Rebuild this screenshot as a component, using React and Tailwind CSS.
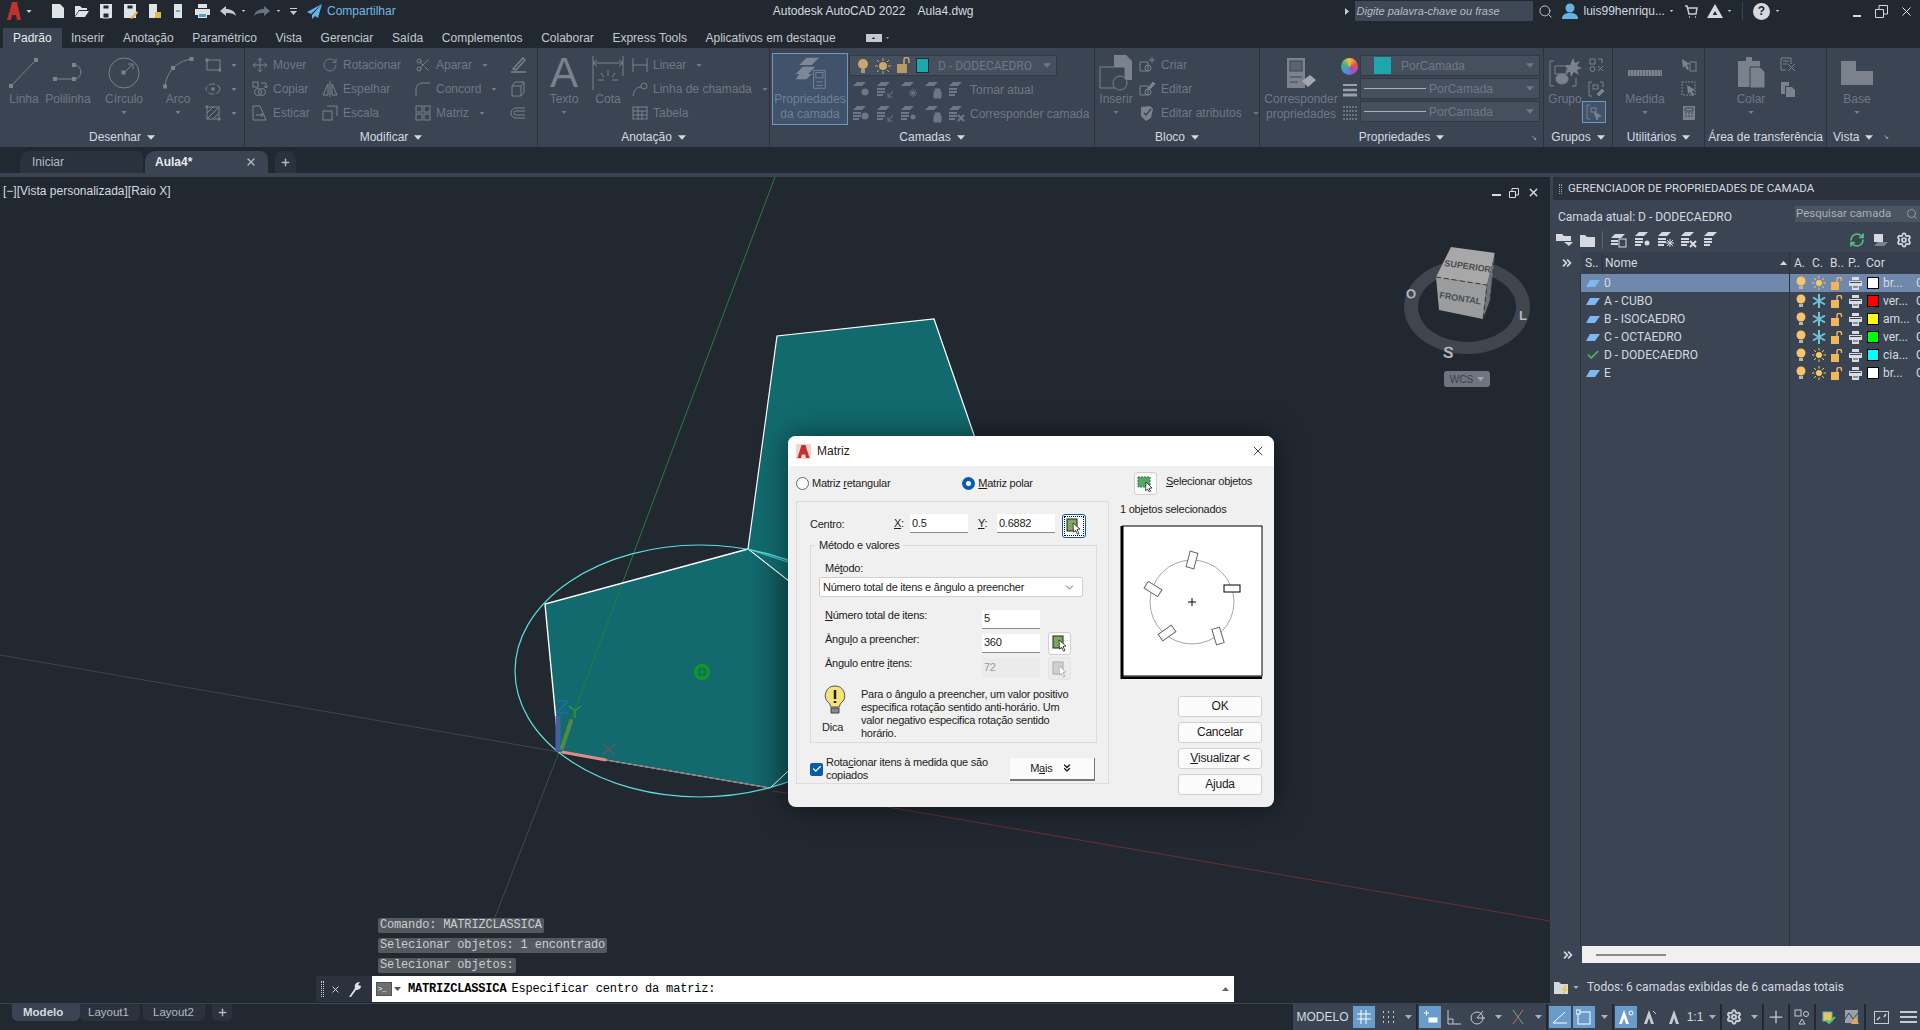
import React from 'react';
import { Move, RotateCw, Scissors, Search, RefreshCw, Settings, Check, ChevronsRight, ChevronsDown, ChevronDown, X, Plus } from 'lucide-react';

const Tri = ({ up = false, size = 7 }) => (
    <svg width={size} height={size - 3} viewBox="0 0 7 4" className="shrink-0">
        <path d={up ? 'M0 4h7L3.5 0z' : 'M0 0h7L3.5 4z'} fill="currentColor" />
    </svg>
);

const Ic = ({ w = 16, h = 16, vb, sw = 1, children }) => (
    <svg width={w} height={h} viewBox={vb || `0 0 ${w} ${h}`} fill="none" stroke="currentColor" strokeWidth={sw} className="shrink-0">
        {children}
    </svg>
);

// camada (parallelogram stack) + small badge
const Stack = ({ badge, n = 2 }) => (
    <Ic w={19} h={18}>
        <path d="M5 1h9l-4 4H1z" fill="currentColor" stroke="none" />
        {n > 1 && <path d="M1 8h8M1 11h8M1 14h6" strokeWidth="2" />}
        {badge === 'bulb' && <circle cx="13" cy="11" r="3.5" fill="currentColor" stroke="none" />}
        {badge === 'arrow' && <path d="M17 10l-5 6M12 12v4h4" />}
        {badge === 'snow' && <path d="M13 8v8M9 12h8M10 9l6 6M16 9l-6 6" />}
        {badge === 'lock' && <path d="M10 11h7v6h-7zM11 11V8h5v3" fill="currentColor" />}
        {badge === 'x' && <path d="M10 10l6 6M16 10l-6 6" strokeWidth="2" />}
        {badge === 'sun' && <circle cx="13" cy="12" r="2.5" fill="currentColor" stroke="none" />}
    </Ic>
);

const Tool = ({ icon, label, caret, gap = 'gap-[5px]' }) => (
    <div className={`flex h-[24px] items-center ${gap}`}>
        {icon}
        {label && <span>{label}</span>}
        {caret && <span className="ml-[5px]"><Tri size={6} /></span>}
    </div>
);

const Big = ({ w, icon, label, caret, extra = '' }) => (
    <div className={`flex shrink-0 flex-col items-center ${w} ${extra}`}>
        <div className="flex h-[39px] items-center justify-center">{icon}</div>
        <div className="text-center leading-[15px]">{label}</div>
        {caret && <div className="mt-[4px]"><Tri size={6} /></div>}
    </div>
);

const Panel = ({ w, label, corner, noCaret, children }) => (
    <div className={`relative flex shrink-0 flex-col border-r border-[#2b323e] ${w}`}>
        <div className="flex h-[79px] pt-[5px]">{children}</div>
        <div className="flex h-[20px] items-center justify-center gap-[6px] text-[#d6dae0]">
            <span>{label}</span>
            {!noCaret && <Tri size={8} />}
        </div>
        {corner && <span className="absolute bottom-[6px] right-[6px] text-[7px] leading-none text-[#aab0ba]">↘</span>}
    </div>
);

const Combo = ({ w = 'w-[180px]', children }) => (
    <div className={`flex h-[21px] items-center justify-between whitespace-nowrap border border-[#323a47] bg-[#464f5e] pr-[5px] text-[#6f7786] ${w}`}>
        <div className="flex items-center">{children}</div>
        <Tri size={8} />
    </div>
);

const Line = () => (
    <><span className="ml-[3px] mr-[2px] h-px w-[62px] bg-[#aab0ba]" /><span className="ml-[1px]">PorCamada</span></>
);

const Ribbon = () => (
    <div className="flex h-[99px] bg-[#3b4453] text-[12px] text-[#6f7786]">
        <Panel w="w-[245px]" label="Desenhar">
            <div className="flex pl-[5px] text-[#7b828e]">
                <Big w="w-[38px]" label={<span className="text-[#6f7786]">Linha</span>} icon={<Ic w={32} h={32}><path d="M3 29L28 3" /><rect x="1.5" y="27.5" width="3" height="3" fill="currentColor" /><rect x="26.5" y="1.5" width="3" height="3" fill="currentColor" /></Ic>} />
                <Big w="w-[50px]" label={<span className="text-[#6f7786]">Polilinha</span>} icon={<Ic w={32} h={24}><path d="M3 18h19a7 7 0 0 0 0-14" /><rect x="1.5" y="16.5" width="3" height="3" fill="currentColor" /><rect x="20.5" y="16.5" width="3" height="3" fill="currentColor" /><rect x="20.5" y="2.5" width="3" height="3" fill="currentColor" /></Ic>} />
                <Big w="w-[50px]" extra="ml-[6px]" caret label={<span className="text-[#6f7786]">Círculo</span>} icon={<Ic w={32} h={32}><circle cx="16" cy="16" r="15" /><rect x="14" y="14" width="3" height="3" fill="currentColor" /><path d="M16 16l8-8M20 7h5v5" /></Ic>} />
                <Big w="w-[50px]" extra="ml-[4px]" caret label={<span className="text-[#6f7786]">Arco</span>} icon={<Ic w={32} h={32}><path d="M3 30C4 16 14 4 30 2" /><rect x="1.5" y="28" width="3" height="3" fill="currentColor" /><rect x="9.5" y="9.5" width="3" height="3" fill="currentColor" /><rect x="28" y="0.5" width="3" height="3" fill="currentColor" /></Ic>} />
                <div className="ml-[2px] flex flex-col">
                    <Tool caret icon={<Ic><rect x="2" y="3" width="13" height="10" /><rect x="1" y="2" width="2" height="2" fill="currentColor" /><rect x="14" y="12" width="2" height="2" fill="currentColor" /></Ic>} />
                    <Tool caret icon={<Ic><ellipse cx="8" cy="8" rx="7" ry="5" strokeDasharray="6 2" /><rect x="7" y="7" width="2" height="2" fill="currentColor" /></Ic>} />
                    <Tool caret icon={<Ic><rect x="2" y="2" width="12" height="12" /><path d="M2 8l6-6M2 14L14 2M8 14l6-6M0 2h3M13 14h3M2 0v3M14 13v3" /></Ic>} />
                </div>
            </div>
        </Panel>
        <Panel w="w-[293px]" label="Modificar">
            <div className="flex pl-[7px]">
                <div className="w-[70px]">
                    <Tool label="Mover" icon={<span className="text-[#7b828e]"><Move size={16} strokeWidth={1.5} /></span>} />
                    <Tool label="Copiar" icon={<span className="text-[#7b828e]"><Ic><rect x="1" y="1" width="5" height="5" /><path d="M9 2h5v4M12 5l2 2 2-2" /><circle cx="6" cy="11" r="3.5" /><circle cx="10" cy="11" r="3.5" /></Ic></span>} />
                    <Tool label="Esticar" icon={<span className="text-[#7b828e]"><Ic><path d="M1 1h7l6 14H1zM4 10h7M9 8l2 2-2 2" /></Ic></span>} />
                </div>
                <div className="w-[93px]">
                    <Tool label="Rotacionar" icon={<span className="text-[#7b828e]"><RotateCw size={16} strokeWidth={1.3} /></span>} />
                    <Tool label="Espelhar" icon={<span className="text-[#7b828e]"><Ic><path d="M8 0v16M6 3L1 14h5zM10 3l5 11h-5z" /></Ic></span>} />
                    <Tool label="Escala" icon={<span className="text-[#7b828e]"><Ic><rect x="1" y="6" width="9" height="9" /><path d="M5 1h10v10" /></Ic></span>} />
                </div>
                <div className="w-[95px]">
                    <Tool label="Aparar" caret icon={<span className="text-[#7b828e]"><Scissors size={16} strokeWidth={1.4} /></span>} />
                    <Tool label="Concord" caret icon={<span className="text-[#7b828e]"><Ic><path d="M1 15V8a6 6 0 0 1 6-6h8" /></Ic></span>} />
                    <Tool label="Matriz" caret icon={<span className="text-[#7b828e]"><Ic><rect x="1" y="1" width="6" height="6" /><rect x="9" y="1" width="6" height="6" /><rect x="1" y="9" width="6" height="6" /><rect x="9" y="9" width="6" height="6" /></Ic></span>} />
                </div>
                <div className="text-[#7b828e]">
                    <Tool icon={<Ic><path d="M3 12L13 1l2 2-9 10zM1 15h15" strokeWidth="1.5" /></Ic>} />
                    <Tool icon={<Ic><path d="M2 5h9v10H2zM2 5l3-4h9v10l-3 4M11 5l3-4" /></Ic>} />
                    <Tool icon={<Ic><path d="M15 3H6a5 5 0 0 0 0 10h9M15 6H6a2 2 0 0 0 0 4h9" /></Ic>} />
                </div>
            </div>
        </Panel>
        <Panel w="w-[232px]" label="Anotação">
            <div className="flex pl-[6px]">
                <Big w="w-[40px]" caret label="Texto" icon={<span className="font-['Liberation_Sans',sans-serif] text-[42px] leading-none text-[#7b828e]">A</span>} />
                <Big w="w-[44px]" extra="ml-[2px]" label="Cota" icon={<span className="text-[#7b828e]"><Ic w={32} h={34}><path d="M1 0v34M31 0v20M1 7h30M5 4L1 7l4 3M27 4l4 3-4 3M16 14v6M9 17l3 4M23 17l-3 4M6 24h6M20 24h6" /></Ic></span>} />
                <div className="ml-[2px] flex flex-col">
                    <Tool label="Linear" caret icon={<span className="text-[#7b828e]"><Ic><path d="M1 1v14M15 1v14M1 8h14" /></Ic></span>} />
                    <Tool label="Linha de chamada" caret icon={<span className="text-[#7b828e]"><Ic><path d="M1 15c1-5 3-9 8-9" /><circle cx="12" cy="5" r="3" /></Ic></span>} />
                    <Tool label="Tabela" icon={<span className="text-[#7b828e]"><Ic><rect x="1" y="2" width="14" height="12" /><path d="M1 6h14M1 10h14M6 2v12M10 6v8" /></Ic></span>} />
                </div>
            </div>
        </Panel>
        <Panel w="w-[325px]" label="Camadas">
            <div className="flex pl-[2px]">
                <div className="flex h-[72px] w-[76px] shrink-0 flex-col items-center border border-[#6d99bb] bg-[#40536a] leading-[15px]">
                    <div className="flex h-[38px] items-center text-[#7f8794]"><Ic w={36} h={34} vb="0 2 36 38"><path d="M14 4h14l-8 8H6zM10 14h14l-8 8H2zM6 22h14l-6 6H2z" fill="currentColor" stroke="none" /><rect x="22" y="18" width="13" height="20" fill="#40536a" /><rect x="24.5" y="20.5" width="8" height="6" /><path d="M25 31h7M32 35h-7" /></Ic></div>
                    <div className="text-center text-[#708096]">Propriedades<br />da camada</div>
                </div>
                <div className="ml-[1px] mt-[2px] flex flex-col">
                    <Combo w="w-[208px]">
                        <span className="ml-[6px] flex items-center gap-[5px]">
                            <Ic w={14} h={16}><circle cx="7" cy="6" r="5" fill="#c9a86c" stroke="none" /><rect x="5" y="11" width="4" height="4" fill="#9a9a8c" stroke="none" /></Ic>
                            <Ic w={16} h={16}><circle cx="8" cy="8" r="4" fill="#c9a86c" stroke="none" /><path d="M8 0v3M8 13v3M0 8h3M13 8h3M2 2l2 2M12 12l2 2M14 2l-2 2M2 14l2-2" stroke="#c9a86c" /></Ic>
                            <Ic w={15} h={17}><rect x="1" y="7" width="10" height="9" fill="#b99a66" stroke="none" /><path d="M8 7V3a2.500 2.500 0 0 1 5 0v3" stroke="#c9a86c" strokeWidth="1.500" /></Ic>
                            <span className="h-[15px] w-[13px] border border-[#222933] bg-[#1ea6ac]" />
                            <span className="ml-[4px] font-['Roboto',sans-serif]">D - DODECAEDRO</span>
                        </span>
                    </Combo>
                    <div className="mt-[2px] flex h-[24px] items-center gap-[5px] pl-[3px]">
                        <Stack badge="bulb" n={1} /><Stack badge="arrow" /><Stack badge="snow" n={1} /><Stack badge="lock" n={1} /><Stack />
                        <span className="-ml-[2px]">Tornar atual</span>
                    </div>
                    <div className="flex h-[24px] items-center gap-[5px] pl-[3px]">
                        <Stack badge="bulb" /><Stack badge="arrow" /><Stack badge="sun" /><Stack badge="lock" n={1} /><Stack badge="x" />
                        <span className="-ml-[2px] whitespace-nowrap">Corresponder camada</span>
                    </div>
                </div>
            </div>
        </Panel>
        <Panel w="w-[165px]" label="Bloco">
            <div className="flex pl-[3px]">
                <Big w="w-[36px]" caret label="Inserir" icon={<span className="text-[#7b828e]"><Ic w={34} h={38}><path d="M15 1h12l6 6v19H15z" fill="currentColor" stroke="none" /><rect x="1" y="13" width="25" height="21" fill="#3b4453" /><circle cx="21" cy="29" r="7" fill="#3b4453" /></Ic></span>} />
                <div className="ml-[5px] flex flex-col">
                    <Tool label="Criar" gap="gap-[6px]" icon={<span className="text-[#7b828e]"><Ic><path d="M1 5h8v9H1z" /><circle cx="9" cy="11" r="3" /><path d="M13 0v6M10 3h6" /></Ic></span>} />
                    <Tool label="Editar" gap="gap-[6px]" icon={<span className="text-[#7b828e]"><Ic><path d="M1 5h8v9H1z" /><circle cx="9" cy="11" r="3" /><path d="M9 7l5-6 2 2-5 5" fill="currentColor" /></Ic></span>} />
                    <Tool label="Editar atributos" caret gap="gap-[6px]" icon={<span className="text-[#7b828e]"><Ic><path d="M2 2l9-1 3 3-2 9-5 3-5-5z" fill="currentColor" stroke="none" /><path d="M5 8l2 2 5-6" stroke="#3b4453" strokeWidth="1.500" /></Ic></span>} />
                </div>
            </div>
        </Panel>
        <Panel w="w-[284px]" label="Propriedades" corner>
            <div className="flex pl-[3px]">
                <Big w="w-[76px]" label={<>Corresponder<br />propriedades</>} icon={<span className="text-[#7b828e]"><Ic w={34} h={32}><rect x="3" y="1" width="18" height="30" fill="currentColor" stroke="none" /><rect x="6" y="4" width="12" height="10" fill="#5c6471" stroke="#3b4453" /><path d="M6 20h12M6 25h8" stroke="#3b4453" /><path d="M18 24l8-6 6 5-8 7z" fill="#a2a7af" stroke="none" /></Ic></span>} />
                <div className="mt-[2px] flex w-[21px] shrink-0 flex-col items-center">
                    <div className="flex h-[23px] items-center"><span className="h-[17px] w-[17px] rounded-full bg-[conic-gradient(#f0c040,#e05050,#a050c0,#5090e0,#40b080,#f0c040)]" /></div>
                    <div className="flex h-[23px] items-center text-[#9aa0a8]"><Ic><path d="M1 3h14" strokeWidth="2" /><path d="M1 8h14" strokeWidth="2.500" /><path d="M1 13h14" strokeWidth="3" /></Ic></div>
                    <div className="flex h-[23px] items-center text-[#9aa0a8]"><Ic><path d="M1 2h15M1 6h15M1 10h15M1 14h15" strokeDasharray="2 1" /></Ic></div>
                </div>
                <div className="mt-[2px] flex flex-col gap-[2px]">
                    <Combo><span className="ml-[13px] mr-[10px] h-[17px] w-[17px] bg-[#1ea6ac]" /><span>PorCamada</span></Combo>
                    <Combo><Line /></Combo>
                    <Combo><Line /></Combo>
                </div>
            </div>
        </Panel>
        <Panel w="w-[69px]" label="Grupos">
            <div className="flex pl-[3px] text-[#7b828e]">
                <Big w="w-[36px]" label={<span className="text-[#6f7786]">Grupo</span>} icon={<Ic w={33} h={30}><path d="M5 3H1v25h4M23 28h4v-8" /><rect x="6" y="8" width="12" height="8" /><ellipse cx="13" cy="21" rx="6" ry="5" fill="currentColor" /><path d="M24 0l2 5 5-2-3 5 5 2-5 2 2 5-5-3-3 5-1-5-5 1 3-4-3-4 5 0z" fill="currentColor" stroke="none" /></Ic>} />
                <div className="ml-[5px] flex flex-col">
                    <div className="flex h-[24px] items-center"><Ic><path d="M2 2h5v5H2zM10 9l5 5M15 9l-5 5" /><circle cx="4.500" cy="12" r="2.500" /><path d="M10 2h4v4" /></Ic></div>
                    <div className="flex h-[24px] items-center"><Ic><path d="M4 1H1v14h3M12 1h3v5" /><rect x="5" y="4" width="5" height="4" /><path d="M9 13l5-5 2 2-5 5z" fill="currentColor" /></Ic></div>
                    <div className="-ml-[6px] flex h-[22px] w-[24px] items-center justify-center border border-[#6d99bb] bg-[#40536a]"><Ic><path d="M4 1H1v14h3" /><rect x="5" y="4" width="5" height="4" /><path d="M8 8l7 4-3 1-1 3z" fill="currentColor" /></Ic></div>
                </div>
            </div>
        </Panel>
        <Panel w="w-[92px]" label="Utilitários">
            <div className="flex pl-[10px] text-[#7b828e]">
                <Big w="w-[44px]" caret label={<span className="text-[#6f7786]">Medida</span>} icon={<span className="h-[6px] w-[34px] bg-[repeating-linear-gradient(90deg,#7b828e_0,#7b828e_2px,#5f6673_2px,#5f6673_3px)]" />} />
                <div className="ml-[14px] flex flex-col">
                    <div className="flex h-[24px] items-center"><Ic><path d="M1 2l8 5-3 1 2 4-2 1-2-4-2 2z" fill="currentColor" stroke="none" /><rect x="9" y="5" width="6" height="9" /></Ic></div>
                    <div className="flex h-[24px] items-center"><Ic><rect x="1" y="1" width="13" height="13" strokeDasharray="2 1" /><path d="M6 4l8 5-3 1 2 4-2 1-2-4-2 2z" fill="currentColor" stroke="none" /></Ic></div>
                    <div className="flex h-[24px] items-center"><Ic><rect x="2" y="1" width="12" height="14" fill="currentColor" stroke="none" /><path d="M4 3h8v3H4zM4 8h2M7 8h2M10 8h2M4 11h2M7 11h2M10 11h2" stroke="#3b4453" /></Ic></div>
                </div>
            </div>
        </Panel>
        <Panel w="w-[122px]" noCaret label={<span className="whitespace-nowrap">Área de transferência</span>}>
            <div className="flex pl-[28px] text-[#7b828e]">
                <Big w="w-[36px]" caret label={<span className="text-[#6f7786]">Colar</span>} icon={<Ic w={28} h={34}><path d="M1 5h8V1h6v4h8v6H13v20H1z" fill="currentColor" stroke="none" /><path d="M13 11h10l5 5v16H13z" fill="currentColor" stroke="#3b4453" /></Ic>} />
                <div className="ml-[11px] flex flex-col">
                    <div className="flex h-[24px] items-center"><Ic><path d="M1 1h10v6M1 1v12h5M3 4h6M3 7h4" /><path d="M8 14l7-7M15 14L8 7" /></Ic></div>
                    <div className="flex h-[24px] items-center"><Ic><path d="M1 1h8v4H5v8H1z" fill="currentColor" stroke="none" /><path d="M6 6h6l3 3v7H6z" fill="currentColor" stroke="none" /></Ic></div>
                </div>
            </div>
        </Panel>
        <div className="flex w-[93px] shrink-0 flex-col">
            <div className="flex h-[79px] pl-[11px] pt-[5px] text-[#7b828e]">
                <Big w="w-[38px]" caret label={<span className="text-[#6f7786]">Base</span>} icon={<Ic w={32} h={24}><path d="M0 0h15v10h17v14H0z" fill="currentColor" stroke="none" /></Ic>} />
            </div>
            <div className="flex h-[20px] items-center gap-[6px] pl-[6px] text-[#d6dae0]">
                <span>Vista</span><Tri size={8} /><span className="ml-[4px] text-[7px] text-[#aab0ba]">↘</span>
            </div>
        </div>
    </div>
);

const TitleBar = () => (
    <div className="flex h-[28px] items-center bg-[#212830] pb-[6px] text-[12px] text-[#d6dae0]">
        <svg width="14" height="18" viewBox="0 0 14 18" className="ml-[7px] shrink-0"><path d="M5 0h5l4 18H10L9 13H5L4 18H0z" fill="#c0322b" /></svg>
        <span className="ml-[5px] text-[#c8ccd2]"><Tri size={6} /></span>
        <div className="ml-[18px] flex items-center gap-[8px] text-[#dfe3e8]">
            <Ic><path d="M2 1h8l4 4v10H2z" fill="currentColor" stroke="none" /></Ic>
            <Ic><path d="M1 13V3h5l2 2h5v2H5z M1 14l4-6h10l-4 6z" fill="currentColor" stroke="none" /></Ic>
            <Ic><path d="M2 1h12v14H2z" fill="currentColor" stroke="none" /><rect x="5" y="2" width="6" height="4" fill="#212830" /><rect x="5" y="10" width="6" height="5" fill="#212830" /></Ic>
            <Ic><path d="M2 1h12v14H2z" fill="currentColor" stroke="none" /><rect x="5" y="2" width="6" height="4" fill="#212830" /><path d="M8 15l7-7 1 2-6 6z" fill="#e9b44c" stroke="none" /></Ic>
            <Ic><rect x="3" y="1" width="8" height="14" fill="currentColor" stroke="none" /><rect x="9" y="9" width="6" height="6" fill="#e9b44c" stroke="none" /></Ic>
            <Ic><rect x="4" y="1" width="8" height="14" fill="currentColor" stroke="none" /><path d="M6 8h4" stroke="#5aaee0" strokeWidth="2" /></Ic>
            <Ic w={17}><path d="M4 1h9v4H4zM1 6h15v6H1zM4 10h9v5H4z" fill="currentColor" stroke="none" /><path d="M5 11h7v3H5z" fill="#4b9fd8" stroke="none" /></Ic>
        </div>
        <div className="ml-[8px] flex items-center text-[#c8ccd2]">
            <Ic w={18}><path d="M7 3L1 8l6 5v-3c4 0 7 0 10 3-1-5-5-7-10-7z" fill="currentColor" stroke="none" /></Ic>
            <span className="ml-[4px]"><Tri size={5} /></span>
            <span className="ml-[7px] text-[#6a7280]"><Ic w={18}><path d="M11 3l6 5-6 5v-3C7 10 4 10 1 13c1-5 5-7 10-7z" fill="currentColor" stroke="none" /></Ic></span>
            <span className="ml-[5px]"><Tri size={5} /></span>
            <span className="ml-[9px] flex flex-col items-center gap-[2px]"><span className="h-px w-[7px] bg-[#c8ccd2]" /><Tri size={7} /></span>
        </div>
        <svg width="17" height="17" viewBox="0 0 17 17" className="ml-[9px] shrink-0"><path d="M16 1L1 9l4 2zM16 1L6 12v4l3-3 3 2z" fill="#66b2e4" /></svg>
        <span className="ml-[4px] text-[#74b8e4]">Compartilhar</span>
        <span className="ml-[377px] whitespace-nowrap">Autodesk AutoCAD 2022</span>
        <span className="ml-[12px]">Aula4.dwg</span>
        <span className="ml-[371px] text-[#c8ccd2]"><svg width="4" height="7" viewBox="0 0 4 7"><path d="M0 0l4 3.500L0 7z" fill="currentColor" /></svg></span>
        <div className="ml-[6px] flex h-[20px] w-[178px] items-center bg-[#3f4856] pl-[2px] text-[11px] italic text-[#b7bcc4]">Digite palavra-chave ou frase</div>
        <span className="ml-[5px] text-[#c8ccd2]"><Search size={15} strokeWidth={1.5} /></span>
        <svg width="16" height="16" viewBox="0 0 16 16" className="ml-[9px] shrink-0"><circle cx="8" cy="5" r="4.500" fill="#66b2e4" /><path d="M0 16c0-5 4-6 8-6s8 1 8 6z" fill="#66b2e4" /></svg>
        <span className="ml-[6px] whitespace-nowrap">luis99henriqu...</span>
        <span className="ml-[4px] text-[#c8ccd2]"><Tri size={5} /></span>
        <span className="ml-[11px] text-[#c8ccd2]"><Ic w={13} h={13}><path d="M0 1h2l2 8h7l1-6H3M4 12h1M10 12h1" strokeWidth="1.500" /></Ic></span>
        <svg width="16" height="14" viewBox="0 0 16 14" className="ml-[9px] shrink-0"><path d="M8 0l8 14h-4L8 7l-4 7H0z M4 11h8v3H4z" fill="#d6dae0" /></svg>
        <span className="ml-[4px] text-[#c8ccd2]"><Tri size={5} /></span>
        <span className="ml-[10px] h-[18px] w-px bg-[#3b4453]" />
        <span className="ml-[10px] flex h-[17px] w-[17px] items-center justify-center rounded-full bg-[#d6dae0] text-[12px] font-bold text-[#212830]">?</span>
        <span className="ml-[5px] text-[#c8ccd2]"><Tri size={5} /></span>
        <span className="ml-[73px] h-[2px] w-[8px] translate-y-[5px] bg-[#d6dae0]" />
        <span className="ml-[14px] text-[#d6dae0]"><Ic w={13} h={13}><path d="M.5 4.500h8v8h-8zM4 4V.5h8.500V9H9" /></Ic></span>
        <span className="ml-[11px] text-[#e6e9ed]"><X size={15} strokeWidth={1.6} /></span>
    </div>
);

const tabs = ['Inserir', 'Anotação', 'Paramétrico', 'Vista', 'Gerenciar', 'Saída', 'Complementos', 'Colaborar', 'Express Tools', 'Aplicativos em destaque'];

const MenuTabs = () => (
    <div className="flex h-[20px] items-center bg-[#212830] pl-[3px] text-[12px] text-[#c4c9d0]">
        <div className="flex h-[20px] items-center bg-[#3b4453] px-[10px] text-[#e6e9ed]">Padrão</div>
        {tabs.map((t) => <div key={t} className="whitespace-nowrap px-[9.300px]">{t}</div>)}
        <span className="ml-[21px] flex h-[8px] w-[16px] items-center justify-center bg-[#c4c9d0] text-[#212830]"><Tri size={5} up /></span>
        <span className="ml-[3px] text-[#8f959f]"><Tri size={5} /></span>
    </div>
);

const DocTabs = () => (
    <>
        <div className="flex h-[26px] items-end bg-[#212830] pl-[20px] text-[12px]">
            <div className="flex h-[22px] w-[123px] items-center rounded-tl-[10px] rounded-tr-[6px] bg-[#2b323e] pl-[12px] text-[#b4bac3]">Iniciar</div>
            <div className="ml-[2px] flex h-[22px] w-[123px] items-center justify-between rounded-tl-[10px] rounded-tr-[8px] bg-[#3b4453] pl-[10px] pr-[11px] font-bold text-[#e6e9ed]">
                <span>Aula4*</span>
                <span className="text-[#b4bac3]"><X size={12} strokeWidth={2.5} /></span>
            </div>
            <div className="ml-[7px] flex h-[22px] w-[21px] items-center justify-center rounded-t-[8px] bg-[#2b323e] text-[#b4bac3]"><Plus size={11} strokeWidth={3} /></div>
        </div>
        <div className="h-[4px] bg-[#3b4453]" />
    </>
);

const Canvas = () => (
    <svg width="1550" height="826" viewBox="0 177 1550 826" className="absolute left-0 top-0">
        <defs>
            <linearGradient id="fade" x1="0" x2="1" y1="0" y2="0">
                <stop offset="0.8" stopColor="#126a6e" />
                <stop offset="1" stopColor="#0e5056" />
            </linearGradient>
        </defs>
        {/* ejes */}
        <path d="M0 655L559 752" stroke="#3f454c" />
        <path d="M882 806L1550 921" stroke="#6b2f33" />
        <path d="M559 752L490 930" stroke="#444a50" />
        {/* pentagonos */}
        <path d="M748 549L777 336L934 319L974 435L1000 520L900 600L790 582z" fill="#126a6e" stroke="#fff" strokeWidth="1.200" />
        <path d="M545 604L748 549L800 590L800 775L770 788L559 752z" fill="url(#fade)" />
        <path d="M775 177L559 752" stroke="#2c7a3c" />
        <path d="M748 549L545 604L559 752" fill="none" stroke="#fff" strokeWidth="1.400" />
        <path d="M559 752L770 788L800 760" fill="none" stroke="#fff" strokeWidth="1" />
        <path d="M559 752L770 788" fill="none" stroke="#8a6a6a" strokeWidth="1" />
        <path d="M748 549L800 590" stroke="#fff" />
        <path d="M748 549L800 566" stroke="#4fd8dc" />
        <ellipse cx="700" cy="671" rx="185" ry="126" fill="none" stroke="#5fdde2" strokeWidth="1.200" />
        <path d="M772 791L882 806" stroke="#6b2f33" />
        {/* centro */}
        <circle cx="702" cy="672" r="6.500" fill="none" stroke="#0aa01e" strokeWidth="3" />
        <path d="M702 667v10M697 672h10" stroke="#0aa01e" />
        {/* UCS */}
        <path d="M558 716v36" stroke="#44609f" strokeWidth="5" />
        <path d="M562 748l9-27" stroke="#4f8b44" strokeWidth="4" strokeLinecap="round" />
        <path d="M562 752l44 8" stroke="#e28a86" strokeWidth="3" />
        <path d="M557 701h11l-11 12h11" fill="none" stroke="#1f6fc0" strokeWidth="1.200" />
        <path d="M569 706l6 5 6-5M575 711v7" fill="none" stroke="#2aa33e" strokeWidth="1.200" />
        <path d="M603 744l12 11M615 744l-12 11" stroke="#a04a4a" />
        {/* viewcube */}
        <path fillRule="evenodd" d="M1404 307a63 47 0 1 0 126 0a63 47 0 1 0-126 0zM1418 307a49 35 0 1 1 98 0a49 35 0 1 1-98 0z" fill="#40454e" />
        <path d="M1451 247L1495 253L1487 285L1436 277z" fill="#a8a8a8" />
        <path d="M1436 277L1487 285L1483 319L1439 310z" fill="#9b9c9e" />
        <path d="M1495 253L1487 285L1483 319L1490 300z" fill="#6f7276" />
        <path d="M1436 277L1487 285L1483 319M1495 253L1490 300" fill="none" stroke="#35383d" strokeDasharray="5 3" />
        <text x="1444" y="266" fontSize="9" fontWeight="700" fill="#4a4d52" fontFamily="Liberation Sans" transform="rotate(8 1444 266)">SUPERIOR</text>
        <text x="1439" y="298" fontSize="9" fontWeight="700" fill="#4a4d52" fontFamily="Liberation Sans" transform="rotate(9 1439 298)">FRONTAL</text>
        <text x="1406" y="298" fontSize="13" fontWeight="700" fill="#b4b7bc" fontFamily="Liberation Sans" transform="rotate(-12 1412 294)">O</text>
        <text x="1519" y="320" fontSize="13" fontWeight="700" fill="#b4b7bc" fontFamily="Liberation Sans">L</text>
        <text x="1443" y="358" fontSize="16" fontWeight="700" fill="#b4b7bc" fontFamily="Liberation Sans" transform="rotate(6 1449 352)">S</text>
    </svg>
);

const CommandLine = () => (
    <div className="absolute bottom-px left-[316px] w-[918px] font-['Liberation_Mono',monospace] text-[12px] tracking-[-0.17px]">
        <div className="ml-[62px] flex flex-col items-start gap-[5px] text-[#c9cdd1]">
            <span className="rounded-[2px] bg-[#54595f] px-[2px] leading-[15px]">Comando: MATRIZCLASSICA</span>
            <span className="rounded-[2px] bg-[#54595f] px-[2px] leading-[15px]">Selecionar objetos: 1 encontrado</span>
            <span className="rounded-[2px] bg-[#54595f] px-[2px] leading-[15px]">Selecionar objetos:</span>
        </div>
        <div className="mt-[3px] flex h-[26px] items-stretch">
            <div className="flex w-[56px] items-center bg-[#2b323e] pl-[5px] text-[#dfe3e8]">
                <span className="h-[16px] w-[3px] border-x border-dotted border-[#c8ccd2]" />
                <span className="ml-[6px]"><X size={11} strokeWidth={2} /></span>
                <svg width="14" height="16" viewBox="0 0 14 16" className="ml-[7px]"><path d="M1 16l6-9c-1-3 1-6 5-6l-2 3 3 1c0 3-3 4-5 4l-5 7z" fill="currentColor" /></svg>
            </div>
            <div className="flex flex-1 items-center bg-white pl-[4px] pr-[5px] text-black">
                <span className="flex h-[14px] w-[16px] items-center border border-[#555] bg-[#6b6f74] pl-[1px] text-[7px] leading-none text-white">&gt;_</span>
                <span className="ml-[2px] text-[#555]"><Tri size={7} /></span>
                <span className="ml-[7px] font-bold">MATRIZCLASSICA</span>
                <span className="ml-[5px]">Especificar centro da matriz:</span>
                <span className="ml-auto text-[#666]"><Tri size={7} up /></span>
            </div>
        </div>
    </div>
);

const Input = ({ value, disabled }) => (
    <div className={`flex h-[19px] w-[58px] shrink-0 items-center pl-[2px] ${disabled ? 'bg-[#ebebeb] text-[#9a9a9a]' : 'border-b border-[#8a8a8a] bg-white'}`}>{value}</div>
);

const PickIcon = ({ off }) => (
    <svg width="16" height="18" viewBox="0 0 16 18">
        <rect x="1" y="2" width="10" height="12" fill={off ? '#d0d0d0' : '#7aa85f'} stroke={off ? '#aaa' : '#222'} />
        <path d="M7 6l7 6-3 .5 2 4-1.500 .7-2-4-2 2z" fill="#fff" stroke={off ? '#aaa' : '#222'} strokeWidth=".8" />
    </svg>
);

const PickBtn = ({ off, extra = '' }) => (
    <div className={`flex h-[23px] w-[23px] items-center justify-center rounded-[3px] border ${off ? 'border-[#e4e4e4] bg-[#ececec]' : 'border-[#d0d0d0] bg-[#fbfbfb]'} ${extra}`}><PickIcon off={off} /></div>
);

const Btn = ({ children }) => (
    <div className="flex h-[21px] w-[84px] items-center justify-center rounded-[3px] border border-[#d0d0d0] bg-[#fbfbfb]">{children}</div>
);

const Preview = () => (
    <svg width="143" height="154" viewBox="0 0 143 154" className="block">
        <rect x="2.500" y="1" width="139.500" height="150" fill="#fff" stroke="#000" strokeWidth="1" />
        <path d="M2 1v152h140" fill="none" stroke="#000" strokeWidth="3" />
        <circle cx="72" cy="77" r="42" fill="none" stroke="#a8a8a8" />
        <path d="M68 77h8M72 73v8" stroke="#000" />
        <g fill="#fff" stroke="#666">
            <rect x="-4" y="-8" width="8" height="16" transform="translate(72 35) rotate(15)" />
            <rect x="-8" y="-4" width="16" height="8" transform="translate(33 64) rotate(32)" />
            <rect x="-8" y="-4" width="16" height="8" transform="translate(47 108) rotate(-35)" />
            <rect x="-4" y="-8" width="8" height="16" transform="translate(98 111) rotate(-17)" />
        </g>
        <rect x="104" y="60" width="16" height="7" fill="#fff" stroke="#000" />
    </svg>
);

const FieldRow = ({ label, value, disabled, btn, off }) => (
    <div className="flex h-[24px] items-center">
        <span className="w-[163px] shrink-0 -translate-y-[4px] pl-[6px]">{label}</span>
        <Input value={value} disabled={disabled} />
        {btn && <PickBtn off={off} extra={off ? 'ml-[8px] mt-[3px]' : 'ml-[8px]'} />}
    </div>
);

const Dialog = () => (
    <div className="absolute left-[788px] top-[259px] h-[371px] w-[486px] overflow-hidden rounded-[8px] bg-[#f0f0f0] font-['Liberation_Sans',sans-serif] text-[11px] leading-[13px] tracking-[-0.25px] text-[#1c1c1c] shadow-[0_0_30px_rgba(0,0,0,0.5)]">
        <div className="flex h-[30px] items-center bg-white pl-[8px] pr-[8px]">
            <svg width="15" height="15" viewBox="0 0 15 15"><rect width="15" height="15" fill="#f4d3d0" /><path d="M5.500 1h4l4 13H10l-.8-3.500H5.800L5 14H1.500z" fill="#c0322b" /></svg>
            <span className="ml-[6px] text-[12px] tracking-normal">Matriz</span>
            <span className="ml-auto"><X size={16} strokeWidth={1.2} /></span>
        </div>
        <div className="flex pl-[8px] pt-[7px]">
            <div className="w-[313px] shrink-0">
                <div className="flex h-[20px] items-center">
                    <span className="h-[13px] w-[13px] rounded-full border border-[#666] bg-white" />
                    <span className="ml-[3px]">Matriz <u>r</u>etangular</span>
                    <span className="ml-[72px] flex h-[13px] w-[13px] items-center justify-center rounded-full bg-[#0a5cab]"><span className="h-[5px] w-[5px] rounded-full bg-white" /></span>
                    <span className="ml-[3px]"><u>M</u>atriz polar</span>
                </div>
                <div className="mt-[8px] h-[283px] border border-[#dcdcdc] px-[13px] pt-[12px]">
                    <div className="flex h-[24px] items-start">
                        <span className="mt-[4px] w-[84px]">Centro:</span>
                        <span className="mt-[3px] w-[16px]"><u>X</u>:</span>
                        <Input value="0.5" />
                        <span className="ml-[10px] mt-[3px] w-[19px]"><u>Y</u>:</span>
                        <Input value="0.6882" />
                        <div className="ml-[7px] flex h-[24px] w-[24px] items-center justify-center rounded-[3px] border border-[#0a5cab] bg-[#fbfbfb]"><span className="flex h-[20px] w-[20px] items-center justify-center border border-dotted border-black"><PickIcon /></span></div>
                    </div>
                    <div className="relative mt-[7px] h-[198px] w-[287px] border border-[#dcdcdc] px-[8px] pt-[16px]">
                        <span className="absolute -top-[7px] left-[4px] bg-[#f0f0f0] px-[4px]">Método e valores</span>
                        <div className="pl-[6px]">Mé<u>t</u>odo:</div>
                        <div className="mt-[2px] flex h-[20px] w-[264px] items-center justify-between rounded-[2px] border border-[#cfcfcf] bg-white pl-[3px] pr-[6px]">
                            <span>Número total de itens e ângulo a preencher</span>
                            <ChevronDown size={13} strokeWidth={1.2} />
                        </div>
                        <div className="mt-[10px]">
                            <FieldRow label={<><u>N</u>úmero total de itens:</>} value="5" />
                            <FieldRow label={<>Ângu<u>l</u>o a preencher:</>} value="360" btn />
                            <FieldRow label={<>Ângulo entre <u>i</u>tens:</>} value="72" disabled btn off />
                        </div>
                        <div className="mt-[6px] flex pl-[3px]">
                            <div className="flex w-[39px] shrink-0 flex-col items-start">
                                <svg width="22" height="30" viewBox="0 0 22 30" className="ml-[2px]"><path d="M11 1a9.500 9.500 0 0 0-6 17c1 1 1.500 3 1.500 4h9c0-1 .5-3 1.500-4a9.500 9.500 0 0 0-6-17z" fill="#f5e27a" stroke="#555" /><path d="M11 5v9M11 16v2" stroke="#222" strokeWidth="2.500" /><path d="M7 23h8v5H7z" fill="#888" stroke="#444" /></svg>
                                <span className="mt-[6px]">Dica</span>
                            </div>
                            <div className="whitespace-nowrap pt-[3px]">Para o ângulo a preencher, um valor positivo<br />especifica rotação sentido anti-horário. Um<br />valor negativo especifica rotação sentido<br />horário.</div>
                        </div>
                    </div>
                    <div className="mt-[13px] flex items-center">
                        <span className="flex h-[13px] w-[13px] shrink-0 items-center justify-center rounded-[2px] bg-[#0a5cab] text-white"><Check size={10} strokeWidth={3} /></span>
                        <span className="ml-[3px] w-[182px]">Rota<u>c</u>ionar itens à medida que são<br />copiados</span>
                        <div className="ml-[3px] flex h-[23px] w-[86px] items-center justify-center gap-[9px] border-b-2 border-r border-[#777] bg-[#fbfbfb]"><span>M<u>a</u>is</span><ChevronsDown size={12} strokeWidth={2.5} /></div>
                    </div>
                </div>
            </div>
            <div className="-mt-[1px] ml-[11px] flex-1">
                <div className="flex items-center">
                    <div className="ml-[14px] flex h-[23px] w-[23px] items-center justify-center rounded-[3px] border border-[#d0d0d0] bg-[#fbfbfb]"><svg width="17" height="17" viewBox="0 0 17 17"><rect x="1" y="2" width="12" height="10" fill="#55a868" stroke="#2f7a3c" strokeDasharray="2 1" /><path d="M9 7l6 6-3 .3 1.500 3-1.400 .6-1.500-3-2 2z" fill="#fff" stroke="#222" strokeWidth=".8" /></svg></div>
                    <span className="ml-[9px] -translate-y-[2px]"><u>S</u>elecionar objetos</span>
                </div>
                <div className="mt-[8px]">1 objetos selecionados</div>
                <div className="mt-[9px]"><Preview /></div>
                <div className="ml-[58px] mt-[17px] flex flex-col gap-[5px] text-[12px]">
                    <Btn>OK</Btn>
                    <Btn>Cancelar</Btn>
                    <Btn><u>V</u>isualizar &lt;</Btn>
                    <Btn>A<u>j</u>uda</Btn>
                </div>
            </div>
        </div>
    </div>
);

const Bulb = () => <Ic w={10} h={14}><circle cx="5" cy="5" r="4.500" fill="#f6c56b" stroke="none" /><rect x="3" y="10" width="4" height="3" fill="#b9b9a8" stroke="none" /></Ic>;
const Sun = () => <Ic w={14} h={14}><circle cx="7" cy="7" r="3" fill="#f4cc62" stroke="none" /><path d="M7 0v2.500M7 11.500V14M0 7h2.500M11.500 7H14M2 2l2 2M10 10l2 2M12 2l-2 2M2 12l2-2" stroke="#f4cc62" /></Ic>;
const Snow = () => <Ic w={14} h={14}><path d="M7 0v14M1 3.500l12 7M13 3.500l-12 7" stroke="#6fc6d8" strokeWidth="2" /></Ic>;
const Lock = () => <Ic w={12} h={13}><rect x="0" y="5" width="8" height="8" fill="#efb65c" stroke="none" /><path d="M6 5V2.500a2.200 2.200 0 0 1 4.500 0V4" stroke="#efb65c" strokeWidth="1.400" /></Ic>;
const Printer = () => <Ic w={13} h={13}><path d="M3 0h7v3H3zM0 4h13v5H0zM3 8h7v5H3z" fill="#d8dde3" stroke="none" /><path d="M4 10h5M1 5.500h11" stroke="#3b4453" /></Ic>;

const layers = [
    { name: '0', color: '#ffffff', cn: 'br...', sun: true, sel: true },
    { name: 'A - CUBO', color: '#ff0000', cn: 'ver...' },
    { name: 'B - ISOCAEDRO', color: '#ffff00', cn: 'am...' },
    { name: 'C - OCTAEDRO', color: '#00ff00', cn: 'ver...' },
    { name: 'D - DODECAEDRO', color: '#00ffff', cn: 'cia...', sun: true, cur: true },
    { name: 'E', color: '#ffffff', cn: 'br...', sun: true },
];

const Palette = () => (
    <div className="flex w-[370px] shrink-0 flex-col border-l-[3px] border-[#3b4453] bg-[#212830] font-['Roboto',sans-serif] text-[12px] text-[#d6dae0]">
        <div className="flex h-[23px] items-center bg-[#2b323e] pl-[6px] pt-[1px]">
            <span className="h-[10px] w-[3px] border-x border-dotted border-[#9aa0a8]" />
            <span className="ml-[6px] whitespace-nowrap text-[11.500px]">GERENCIADOR DE PROPRIEDADES DE CAMADA</span>
        </div>
        <div className="flex flex-1 flex-col bg-[#3b4453]">
            <div className="flex h-[30px] items-center justify-between pl-[5px] pt-[4px]">
                <span>Camada atual: D - DODECAEDRO</span>
                <div className="-mt-[6px] flex h-[16px] w-[125px] items-center justify-between bg-[#4a5462] pl-[1px] pr-[2px] text-[11.500px] text-[#a8aeb8]">
                    <span>Pesquisar camada</span><Search size={12} strokeWidth={1.5} />
                </div>
            </div>
            <div className="flex h-[20px] items-center pl-[3px] pr-[8px] text-[#d6dae0]">
                <Ic w={17} h={14}><path d="M0 1h6l2 2h7v5H0z" fill="currentColor" stroke="none" /><path d="M8 9h9l-4 4z" fill="currentColor" stroke="none" /></Ic>
                <span className="ml-[7px]"><Ic w={15} h={13}><path d="M0 1h5l2 2h8v10H0z" fill="currentColor" stroke="none" /></Ic></span>
                <span className="ml-[7px] h-[18px] w-px bg-[#5a6472]" />
                <span className="ml-[7px]"><Ic w={17} h={15}><path d="M5 1h10l-4 4H1z" fill="currentColor" stroke="none" /><path d="M1 8h7M1 11h7" strokeWidth="2" /><rect x="9" y="6" width="7" height="8" fill="#3b4453" /></Ic></span>
                <span className="ml-[7px]"><Stack badge="sun" /></span>
                <span className="ml-[4px]"><Stack badge="snow" /></span>
                <span className="ml-[4px]"><Stack badge="x" /></span>
                <span className="ml-[4px]"><Stack /></span>
                <span className="ml-auto text-[#4fc27a]"><RefreshCw size={16} strokeWidth={2.500} /></span>
                <span className="ml-[8px]"><Ic w={15} h={14}><path d="M1 1h9v8H1z" fill="currentColor" stroke="none" /><path d="M1 13l4-4h10l-4 4z" fill="#7b828e" stroke="none" /></Ic></span>
                <span className="ml-[8px]"><Settings size={16} strokeWidth={2.500} /></span>
            </div>
            <div className="mt-[2px] flex h-[22px] items-center">
                <div className="flex w-[28px] shrink-0 justify-center"><ChevronsRight size={14} strokeWidth={3} /></div>
                <div className="flex h-full w-[209px] shrink-0 items-center border-r border-[#2b323e] bg-[#363f4d]">
                    <span className="w-[22px] shrink-0 border-r border-[#2b323e] pl-[4px]">S..</span>
                    <span className="pl-[2px]">Nome</span>
                    <span className="ml-auto mr-[2px]"><Tri size={7} up /></span>
                </div>
                <div className="flex h-full flex-1 items-center bg-[#363f4d]">
                    <span className="w-[18px] shrink-0 pl-[4px]">A.</span>
                    <span className="w-[18px] shrink-0 pl-[4px]">C.</span>
                    <span className="w-[18px] shrink-0 pl-[4px]">B..</span>
                    <span className="w-[18px] shrink-0 pl-[4px]">P..</span>
                    <span className="pl-[4px]">Cor</span>
                </div>
            </div>
            <div className="flex flex-1">
                <div className="w-[28px] shrink-0 border-r border-[#2b323e]" />
                <div className="w-[209px] shrink-0 border-r border-[#2b323e]">
                    {layers.map((l) => (
                        <div key={l.name} className={`flex h-[18px] items-center pl-[2px] ${l.sel ? 'bg-[#6f88ab]' : ''}`}>
                            <span className="flex w-[19px] shrink-0 justify-center">
                                {l.cur ? <span className="text-[#59c06a]"><Check size={14} strokeWidth={2.500} /></span> : <svg width="14" height="7" viewBox="0 0 14 7"><path d="M4 0h10L9 7H0z" fill="#7cb8f2" /></svg>}
                            </span>
                            <span className="ml-[2px] whitespace-nowrap">{l.name}</span>
                        </div>
                    ))}
                </div>
                <div className="flex-1 overflow-hidden">
                    {layers.map((l) => (
                        <div key={l.name} className={`flex h-[18px] items-center whitespace-nowrap pl-[3px] ${l.sel ? 'bg-[#6f88ab]' : ''}`}>
                            <span className="flex w-[16px] shrink-0 justify-center"><Bulb /></span>
                            <span className="flex w-[19px] shrink-0 justify-center">{l.sun ? <Sun /> : <Snow />}</span>
                            <span className="flex w-[18px] shrink-0 justify-center"><Lock /></span>
                            <span className="flex w-[19px] shrink-0 justify-center"><Printer /></span>
                            <span className="ml-[2px] h-[12px] w-[12px] shrink-0 border border-black" style={{ backgroundColor: l.color }} />
                            <span className="ml-[4px] w-[33px] shrink-0">{l.cn}</span>
                            <span>C</span>
                        </div>
                    ))}
                </div>
            </div>
            <div className="flex h-[17px]">
                <div className="flex w-[29px] shrink-0 items-center justify-center"><ChevronsRight size={14} strokeWidth={3} /></div>
                <div className="flex flex-1 items-center bg-[#f0f0f0] pl-[14px]"><span className="h-[2px] w-[70px] bg-[#8a8a8a]" /></div>
            </div>
            <div className="flex h-[40px] items-center pl-[1px] pt-[8px]">
                <Ic w={16} h={15}><path d="M0 2h5l2 2h7v10H0z" fill="#d6dae0" stroke="none" /><path d="M11 5l-4 5h3l-2 5 6-6h-3l2-4z" fill="#e9c84c" stroke="none" /></Ic>
                <span className="ml-[3px] text-[#aab0ba]"><Tri size={6} /></span>
                <span className="ml-[8px] whitespace-nowrap">Todos: 6 camadas exibidas de 6 camadas totais</span>
            </div>
        </div>
    </div>
);

const SB = ({ on, children, w = 'w-[22px]' }) => (
    <div className={`mx-[1px] flex h-[22px] shrink-0 items-center justify-center ${w} ${on ? 'bg-[#6a9ccb] text-white' : 'text-[#c8ccd2]'}`}>{children}</div>
);

const SCaret = () => <span className="flex w-[16px] shrink-0 justify-center text-[#aab0ba]"><Tri size={7} /></span>;

const StatusBar = () => (
    <div className="flex h-[27px] border-t border-[#3b4453] bg-[#212830] text-[12px] text-[#d6dae0]">
        <div className="flex h-[17px] items-start pl-[12px] text-[11.500px]">
            <div className="flex h-[17px] w-[68px] items-center rounded-b-[6px] bg-[#3b4453] pl-[11px] font-bold">Modelo</div>
            <div className="flex h-[17px] w-[60px] items-center rounded-b-[6px] bg-[#2b323e] pl-[8px] text-[#b4bac3]">Layout1</div>
            <div className="ml-[3px] flex h-[17px] w-[62px] items-center rounded-b-[6px] bg-[#2b323e] pl-[10px] text-[#b4bac3]">Layout2</div>
            <div className="ml-[7px] flex h-[17px] w-[20px] items-center justify-center rounded-b-[6px] bg-[#2b323e] text-[#b4bac3]"><Plus size={11} strokeWidth={3} /></div>
        </div>
        <div className="ml-auto flex h-[26px] items-center gap-[2px]">
            <div className="flex h-[26px] items-center bg-[#3b4453]">
                <span className="w-[59px] shrink-0 text-center">MODELO</span>
                <SB on><Ic><path d="M1 5h14M1 10h14M5 1v14M10 1v14" /></Ic></SB>
                <SB><Ic><path d="M3 3h1M8 3h1M13 3h1M3 8h1M8 8h1M13 8h1M3 13h1M8 13h1M13 13h1" strokeWidth="2" /></Ic></SB>
                <SCaret />
            </div>
            <div className="flex h-[26px] items-center bg-[#3b4453]">
                <SB on><Ic><path d="M2 4h5M4.500 1.500v5" /><rect x="7" y="9" width="8" height="4" fill="currentColor" /></Ic></SB>
                <SB><Ic><path d="M2 1v14h13M2 10h5v5" /></Ic></SB>
                <SB><Ic><circle cx="7" cy="9" r="6" /><path d="M7 9h8M7 9l6-7" /></Ic></SB>
                <SCaret />
                <SB><Ic><path d="M3 1l10 14" stroke="#4fc27a" /><path d="M13 1L3 15" stroke="#e06060" /></Ic></SB>
                <SCaret />
            </div>
            <div className="flex h-[26px] items-center bg-[#3b4453]">
                <SB on><Ic><path d="M1 14h14M1 14L13 3" /></Ic></SB>
                <SB on><Ic><rect x="2" y="3" width="12" height="12" /><rect x="0" y="1" width="4" height="4" fill="#6a9ccb" /></Ic></SB>
                <SCaret />
            </div>
            <div className="flex h-[26px] items-center bg-[#3b4453]">
                <SB on><Ic><path d="M6 1l5 14H8L6 9l-2 6H1z" fill="currentColor" stroke="none" /><circle cx="13" cy="4" r="2" /></Ic></SB>
                <SB><Ic><path d="M7 1l5 14H9L7 9l-2 6H2z" fill="currentColor" stroke="none" /><path d="M11 2l3 3" /></Ic></SB>
                <SB><Ic><path d="M8 1l5 14h-3L8 9l-2 6H3z" fill="currentColor" stroke="none" /></Ic></SB>
                <span className="w-[18px] shrink-0 text-center">1:1</span>
                <SCaret />
            </div>
            <div className="flex h-[26px] items-center bg-[#3b4453]">
                <SB><Settings size={16} strokeWidth={3} /></SB>
                <SCaret />
            </div>
            <div className="flex h-[26px] items-center bg-[#3b4453]">
                <SB><Plus size={20} strokeWidth={1.500} /></SB>
            </div>
            <div className="flex h-[26px] items-center bg-[#3b4453]">
                <SB><Ic><rect x="1" y="1" width="6" height="6" /><circle cx="12" cy="5" r="2.500" /><path d="M5 15l3-5 3 5z" /></Ic></SB>
            </div>
            <div className="flex h-[26px] items-center bg-[#3b4453]">
                <SB><Ic><rect x="3" y="3" width="9" height="9" fill="#e9c84c" stroke="#5aaee0" /><path d="M6 11l3 3 6-6" stroke="#4fc27a" strokeWidth="2" /></Ic></SB>
                <SB><Ic><rect x="1" y="1" width="13" height="13" fill="#9aa0a8" stroke="none" /><path d="M1 10l4-6 4 6 5-6" stroke="#3b4453" /><path d="M11 8l4 7H7z" fill="#e5a55a" stroke="none" /></Ic></SB>
            </div>
            <div className="flex h-[26px] items-center bg-[#3b4453]">
                <SB w="w-[28px]"><Ic w={15} h={13}><rect x=".5" y=".5" width="14" height="12" /><path d="M3 9l3-3M10 6l2-3" strokeWidth="1.500" /></Ic></SB>
                <SB w="w-[22px]"><Ic w={17} h={14}><path d="M0 2h17M0 7h17M0 12h17" strokeWidth="1.800" /></Ic></SB>
            </div>
        </div>
    </div>
);

export default function App() {
    return (
        <div className="flex h-[1030px] w-[1920px] flex-col overflow-hidden bg-[#212830] font-['Liberation_Sans',sans-serif]">
            <TitleBar />
            <MenuTabs />
            <Ribbon />
            <DocTabs />
            <div className="flex h-[826px]">
                <div className="relative w-[1550px] shrink-0 overflow-hidden bg-[#212830]">
                    <Canvas />
                    <span className="absolute left-[3px] top-[5px] text-[12px] text-[#d6dae0]">[−][Vista personalizada][Raio X]</span>
                    <div className="absolute right-[10px] top-[9px] flex items-center gap-[8px] text-[#d6dae0]">
                        <span className="mt-[5px] h-[2px] w-[9px] bg-current" />
                        <Ic w={10} h={10}><path d="M.5 3.500h6v6h-6zM3 3V.5h6.500V7H7" /></Ic>
                        <X size={13} strokeWidth={2.500} />
                    </div>
                    <div className="absolute left-[1444px] top-[194px] flex h-[16px] w-[46px] items-center justify-center gap-[4px] rounded-[3px] bg-[#6f7480] text-[10px] text-[#3a3f47]">WCS<span className="text-[#a4a8b0]"><Tri size={7} /></span></div>
                    <CommandLine />
                    <Dialog />
                </div>
                <Palette />
            </div>
            <StatusBar />
        </div>
    );
}
